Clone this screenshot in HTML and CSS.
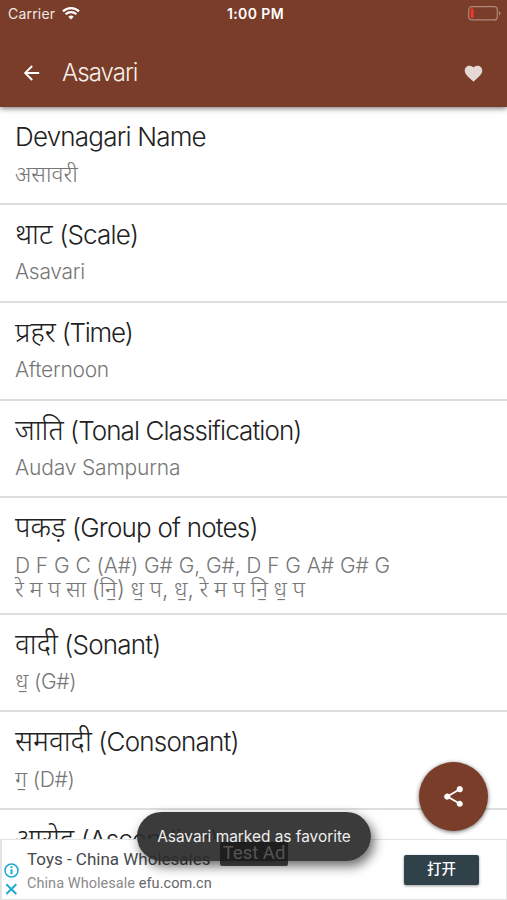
FILE: index.html
```html
<!DOCTYPE html>
<html lang="en">
<head>
<meta charset="utf-8">
<title>Asavari</title>
<link rel="stylesheet" href="styles.css">
</head>
<body>
<div class="screen">
  <header class="top">
    <div class="status">
      <div class="carrier">Carrier
        <svg width="18" height="13" viewBox="0 0 18 13" fill="#fff"><path d="M9 12.6 6.3 9.8a3.9 3.9 0 0 1 5.4 0z"/><path d="M3.6 7.2a7.8 7.8 0 0 1 10.8 0M1 4.4a11.5 11.5 0 0 1 16 0" fill="none" stroke="#fff" stroke-width="2.2"/></svg>
      </div>
      <div class="clock">1:00 PM</div>
      <svg class="battery" width="33" height="15" viewBox="0 0 33 15"><rect x=".7" y=".7" width="28.6" height="13.2" rx="3" fill="none" stroke="#b08878" stroke-width="1.2"/><rect x="2.6" y="2.5" width="3" height="9.6" rx="1" fill="#f5352c"/><path d="M31 5v4.6q1.5-.7 1.5-2.3T31 5" fill="#b08878"/></svg>
    </div>
    <div class="bar">
      <svg class="back" width="24" height="24" viewBox="0 0 24 24"><path d="M20 11H7.83l5.59-5.59L12 4l-8 8 8 8 1.41-1.41L7.83 13H20z" fill="#fff"/></svg>
      <h1>Asavari</h1>
      <svg class="heart" width="21" height="21" viewBox="0 0 24 24"><path d="M12 21.35l-1.45-1.32C5.4 15.36 2 12.28 2 8.5 2 5.42 4.42 3 7.5 3c1.74 0 3.41.81 4.5 2.09C13.09 3.81 14.76 3 16.5 3 19.58 3 22 5.42 22 8.5c0 3.78-3.4 6.86-8.55 11.54z" fill="#e6d9d5"/></svg>
    </div>
  </header>
  <main class="list">
    <section class="row"><h2>Devnagari Name</h2><p><span class="hi">असावरी</span></p></section>
    <section class="row"><h2><span class="hi">थाट</span> (Scale)</h2><p>Asavari</p></section>
    <section class="row"><h2 class="tight"><span class="hi">प्रहर</span> (Time)</h2><p>Afternoon</p></section>
    <section class="row"><h2 class="snug"><span class="hi">जाति</span> (Tonal Classification)</h2><p class="wide">Audav Sampurna</p></section>
    <section class="row notes"><h2><span class="hi">पकड़</span> (Group of notes)</h2><p class="western">D F G C (A#) G# G, G#, D F G A# G# G</p><p class="swar"><span class="hi">रे म प सा (नि॒) ध॒ प, ध॒, रे म प नि॒ ध॒ प</span></p></section>
    <section class="row"><h2><span class="hi">वादी</span> (Sonant)</h2><p><span class="hi">ध॒</span> (G#)</p></section>
    <section class="row"><h2><span class="hi">समवादी</span> (Consonant)</h2><p><span class="hi">ग॒</span> (D#)</p></section>
    <section class="row"><h2><span class="hi">आरोह</span> (Ascending)</h2></section>
  </main>
  <aside class="ad">
    <svg class="adicons" width="15" height="34" viewBox="0 0 15 34" fill="none" stroke="#1da9cf" stroke-width="1.5"><circle cx="7.5" cy="7.5" r="6.5"/><path d="M7.5 6.3v5M7.5 3.3v1.8" stroke-width="2"/><path d="M2.3 21.2l10 9.8M12.3 21.2l-10 9.8" stroke-width="1.9"/></svg>
    <div class="adtext"><div class="adtitle">Toys - China Wholesales</div><div class="adsub">China Wholesale <b>efu.com.cn</b></div></div>
    <div class="open">打开</div>
  </aside>
  <div class="toast">Asavari marked as favorite</div>
  <div class="testad">Test Ad</div>
  <div class="fab"><svg width="25" height="25" viewBox="0 0 24 24"><path d="M18 16.08c-.76 0-1.44.3-1.96.77L8.91 12.7c.05-.23.09-.46.09-.7s-.04-.47-.09-.7l7.05-4.11c.54.5 1.25.81 2.04.81 1.66 0 3-1.34 3-3s-1.34-3-3-3-3 1.34-3 3c0 .24.04.47.09.7L8.04 9.81C7.5 9.31 6.79 9 6 9c-1.66 0-3 1.34-3 3s1.34 3 3 3c.79 0 1.5-.31 2.04-.81l7.12 4.16c-.05.21-.08.43-.08.65 0 1.61 1.31 2.92 2.92 2.92s2.92-1.31 2.92-2.92-1.31-2.92-2.92-2.92z" fill="#fff"/></svg></div>
</div>
</body>
</html>
```
FILE: styles.css
```css
* { box-sizing: border-box; }
body { margin: 0; background: #fff; font-family: Inter, "Noto Sans", "Noto Sans Devanagari", sans-serif; }
h1, h2, p { margin: 0; font-weight: 300; white-space: nowrap; }
svg { display: block; flex: none; }
.screen { position: relative; width: 507px; height: 900px; overflow: hidden; display: flex; flex-direction: column; }
.top { position: relative; z-index: 1; flex: none; height: 107px; background: #793d29; box-shadow: 0 1px 6px rgba(0,0,0,.6); color: #fff; }
.status { height: 27px; padding: 0 6px 0 8px; display: grid; grid-template-columns: 1fr auto 1fr; align-items: center; }
.carrier { display: flex; align-items: center; gap: 7px; font-size: 14px; color: #f3e8e4; letter-spacing: .2px; }
.clock { font-size: 14px; font-weight: 600; letter-spacing: .4px; padding-left: 2px; }
.battery { justify-self: end; }
.bar { height: 80px; padding: 12px 23px 0 20px; display: flex; align-items: center; }
.back { width: 23px; }
h1 { margin-left: 19px; font-size: 24px; line-height: 32px; letter-spacing: -.95px; flex: 1; color: #f8eeea; }
.list { flex: none; }
.row { height: 97.85px; padding: 12px 15px 0; border-bottom: 2px solid #dedede; }
.row.notes { height: 116.2px; }
h2 { height: 36px; line-height: 36px; font-size: 26px; letter-spacing: -.8px; color: #222; }
h2.tight { letter-spacing: -1.3px; }
h2.snug { letter-spacing: -.93px; }
p { height: 24.4px; line-height: 24.4px; margin-top: 7.5px; font-size: 21px; letter-spacing: -.3px; color: #777; }
.wide { letter-spacing: -.17px; }
.western { letter-spacing: -.07px; }
.swar { margin-top: 0; word-spacing: -.8px; }
.hi { letter-spacing: 0; font-size: 1.085em; line-height: 1; }
.ad { position: absolute; left: 0; right: 0; bottom: 0; height: 61px; background: #fff; border: 1px solid #e4e4e4; border-left-width: 2px; display: flex; align-items: center; padding: 0 27px 0 2px; font-family: Roboto, sans-serif; }
.adicons { margin-top: 21px; }
.adtext { margin-left: 8px; flex: 1; padding-top: 3px; }
.adtitle { font-size: 17px; line-height: 24px; color: #45494c; letter-spacing: 0; }
.adsub { font-size: 14.5px; line-height: 25px; color: #8b8b8b; letter-spacing: .05px; }
.adsub b { font-weight: 400; color: #666; }
.open { width: 75px; height: 30px; border-radius: 2px; background: #30414a; color: #fff; font: 500 14.5px/26px "Noto Sans CJK SC", sans-serif; text-align: center; box-shadow: 0 1px 3px rgba(0,0,0,.4); }
.testad { position: absolute; left: 220px; top: 842px; width: 68px; height: 24px; border-radius: 2px; background: rgba(24,24,24,.8); color: #555; font: 18.5px/22px Roboto, sans-serif; text-align: center; white-space: nowrap; }
.toast { position: absolute; left: 137px; top: 812px; width: 234px; height: 49px; border-radius: 25px; background: rgba(42,42,42,.92); box-shadow: 3px 5px 12px rgba(0,0,0,.6); color: #eee; font-size: 15.4px; line-height: 50px; text-align: center; white-space: nowrap; }
.fab { position: absolute; left: 419px; top: 762px; width: 69px; height: 69px; border-radius: 50%; background: #793d29; box-shadow: 0 1px 4px rgba(0,0,0,.6); display: flex; align-items: center; justify-content: center; }
```
